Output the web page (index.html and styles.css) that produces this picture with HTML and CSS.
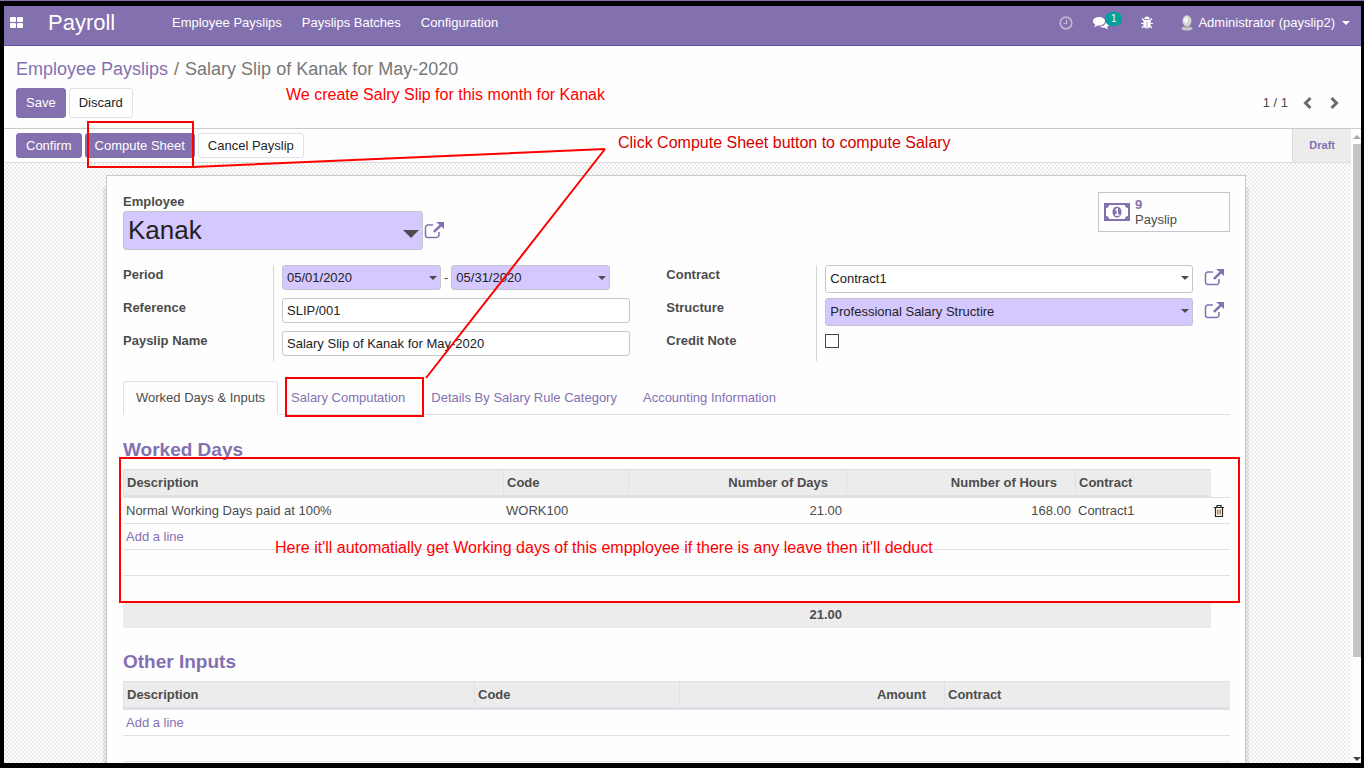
FILE: index.html
```html
<!DOCTYPE html>
<html lang="en">
<head>
  <meta charset="UTF-8">
  <meta name="viewport" content="width=device-width, initial-scale=1.0">
  <title>Payroll - Salary Slip of Kanak for May-2020</title>
  <link rel="stylesheet" href="styles.css">
</head>
<body>
  <svg class="defs" aria-hidden="true">
    <symbol id="ext-link" viewBox="0 0 20 17">
      <path d="M9 3H4a2.500 2.500 0 0 0-2.500 2.500v7.500A2.500 2.500 0 0 0 4 15.500h8.500A2.500 2.500 0 0 0 15 13v-3" fill="none" stroke="currentColor" stroke-width="1.500"/>
      <path d="M12 0h8v7l-2.600-2.600-6.600 6.400-1.800-1.700L15.500 2.800z" fill="currentColor"/>
    </symbol>
  </svg>

  <div class="window">
    <nav class="navbar">
      <a href="#" class="apps" aria-label="Apps">
        <svg width="13" height="11" viewBox="0 0 13 11" fill="#fff"><rect width="6" height="5" rx="1"/><rect x="7" width="6" height="5" rx="1"/><rect y="6" width="6" height="5" rx="1"/><rect x="7" y="6" width="6" height="5" rx="1"/></svg>
      </a>
      <a href="#" class="brand">Payroll</a>
      <div class="menu">
        <a href="#">Employee Payslips</a>
        <a href="#">Payslips Batches</a>
        <a href="#">Configuration</a>
      </div>
      <div class="systray">
        <a href="#" class="clock" aria-label="Activities">
          <svg width="14" height="14" viewBox="0 0 14 14" fill="none" stroke="#c1b6d5"><circle cx="7" cy="7" r="5.800" stroke-width="1.700"/><path d="M7.500 3.500v4H4.500" stroke-width="1.200"/></svg>
        </a>
        <a href="#" class="chat" aria-label="Messages">
          <svg width="16" height="14" viewBox="0 0 16 14" fill="#fff"><path d="M6 1c3.300 0 6 1.900 6 4.200S9.300 9.500 6 9.500c-.5 0-1 0-1.500-.1C3.500 10.200 2.300 10.700 1 10.800c.7-.6 1.200-1.300 1.300-2.200C.900 7.800 0 6.600 0 5.200 0 2.900 2.700 1 6 1z"/><path d="M13 5c1.800.6 3 1.800 3 3.200 0 1.200-.8 2.100-2 2.800.2.900.7 1.500 1.300 2.100-1.300-.1-2.500-.6-3.500-1.400-2.200.3-4.200-.2-5.400-1.100C10 10.600 13.200 8.500 13 5z"/></svg>
          <span class="badge">1</span>
        </a>
        <a href="#" class="bug" aria-label="Debug">
          <svg width="12" height="13" viewBox="0 0 12 13"><path d="M3.300 3.200a2.700 2.700 0 0 1 5.400 0zM2.400 4h7.200v5c0 2-1.500 3.500-3.600 3.500S2.400 11 2.400 9z" fill="#fff"/><path d="M1 2.500l2.200 2M11 2.500l-2.200 2M0 7.500h12M1 12l2.200-2.300M11 12L8.800 9.700" stroke="#fff" stroke-width="1.200"/><path d="M6 5.500V12" stroke="#b3a6cc"/></svg>
        </a>
        <a href="#" class="user">
          <svg width="12" height="16" viewBox="0 0 12 16"><ellipse cx="6" cy="13.500" rx="5.500" ry="2" fill="#c9cac9"/><path d="M4 10h4l1 3H3z" fill="#aaa9b0"/><ellipse cx="6" cy="5.800" rx="4.500" ry="5.500" fill="#d3d7d4"/><ellipse cx="5" cy="5" rx="2" ry="3" fill="#f2f4f1"/></svg>
          <span>Administrator (payslip2)</span>
          <i class="caret"></i>
        </a>
      </div>
    </nav>

    <header class="control-panel">
      <div class="breadcrumb">
        <a href="#">Employee Payslips</a>
        <span class="sep">/</span>
        <span>Salary Slip of Kanak for May-2020</span>
      </div>
      <div class="cp-row">
        <div class="btns">
          <button class="btn primary">Save</button>
          <button class="btn">Discard</button>
        </div>
        <div class="pager">
          <span>1 / 1</span>
          <button aria-label="Previous"><svg width="9" height="12" viewBox="0 0 9 12"><path d="M7.500 1L2.500 6l5 5" fill="none" stroke="#6b6b6b" stroke-width="3"/></svg></button>
          <button aria-label="Next"><svg width="9" height="12" viewBox="0 0 9 12"><path d="M1.500 1l5 5-5 5" fill="none" stroke="#6b6b6b" stroke-width="3"/></svg></button>
        </div>
      </div>
    </header>

    <main class="content">
      <div class="form-view">
        <div class="statusbar">
          <button class="btn primary">Confirm</button>
          <button class="btn primary">Compute Sheet</button>
          <button class="btn">Cancel Payslip</button>
          <span class="status">Draft</span>
        </div>

        <div class="sheet-bg">
          <div class="sheet">
            <div class="title-row">
              <div>
                <label for="employee">Employee</label>
                <div class="employee">
                  <select id="employee" class="field required"><option>Kanak</option></select>
                  <a href="#" class="ext" aria-label="Open employee"><svg><use href="#ext-link"/></svg></a>
                </div>
              </div>
              <button class="stat">
                <svg width="26" height="18" viewBox="0 0 26 18"><path fill-rule="evenodd" d="M0 0h26v18H0zM5 2c0 2-1.200 3-3 3v8c1.800 0 3 1 3 3h16c0-2 1.200-3 3-3V5c-1.800 0-3-1-3-3z" fill="#8370ae"/><ellipse cx="13" cy="9" rx="4.500" ry="5.500" fill="#8370ae"/><path d="M11.300 7.200L13.300 5.800v6M11 12h4.500" fill="none" stroke="#fff" stroke-width="1.400"/></svg>
                <span><b>9</b>Payslip</span>
              </button>
            </div>

            <div class="groups">
              <div class="group">
                <label for="date-from">Period</label>
                <div class="cell period">
                  <input id="date-from" class="field required date" value="05/01/2020">
                  <span>-</span>
                  <input class="field required date" aria-label="Period end" value="05/31/2020">
                </div>
                <label for="reference">Reference</label>
                <div class="cell"><input id="reference" class="field" value="SLIP/001"></div>
                <label for="name">Payslip Name</label>
                <div class="cell"><input id="name" class="field" value="Salary Slip of Kanak for May-2020"></div>
              </div>
              <div class="group">
                <label for="contract">Contract</label>
                <div class="cell">
                  <select id="contract" class="field"><option>Contract1</option></select>
                  <a href="#" class="ext" aria-label="Open contract"><svg><use href="#ext-link"/></svg></a>
                </div>
                <label for="structure">Structure</label>
                <div class="cell">
                  <select id="structure" class="field required"><option>Professional Salary Structire</option></select>
                  <a href="#" class="ext" aria-label="Open structure"><svg><use href="#ext-link"/></svg></a>
                </div>
                <label for="credit">Credit Note</label>
                <div class="cell"><input id="credit" type="checkbox"></div>
              </div>
            </div>

            <div class="tabs">
              <a href="#" class="active">Worked Days &amp; Inputs</a>
              <a href="#">Salary Computation</a>
              <a href="#">Details By Salary Rule Category</a>
              <a href="#">Accounting Information</a>
            </div>

            <h2>Worked Days</h2>
            <table class="list worked">
              <colgroup><col class="w-desc"><col class="w-code"><col class="w-days"><col class="w-hours"><col><col class="w-trash"></colgroup>
              <thead>
                <tr><th>Description</th><th>Code</th><th class="num">Number of Days</th><th class="num">Number of Hours</th><th>Contract</th><td></td></tr>
              </thead>
              <tbody>
                <tr>
                  <td>Normal Working Days paid at 100%</td><td>WORK100</td><td class="num">21.00</td><td class="num">168.00</td><td>Contract1</td>
                  <td class="trash"><button aria-label="Delete"><svg width="10" height="12" viewBox="0 0 10 12" fill="none" stroke="#222"><path d="M0 2.500h10M3 2.500v-2h4v2M1.500 3v8.500h7V3" stroke-width="1.200"/><path d="M3.500 4.500v5M5 4.500v5M6.500 4.500v5" stroke="#8a5a2c" stroke-width=".8"/></svg></button></td>
                </tr>
                <tr><td colspan="6"><a href="#">Add a line</a></td></tr>
                <tr><td colspan="6"></td></tr>
                <tr class="last"><td colspan="6"></td></tr>
              </tbody>
              <tfoot>
                <tr><td></td><td></td><td class="num">21.00</td><td></td><td></td><td class="blank"></td></tr>
              </tfoot>
            </table>

            <h2>Other Inputs</h2>
            <table class="list other">
              <colgroup><col class="o-desc"><col class="o-code"><col class="o-amount"><col></colgroup>
              <thead>
                <tr><th>Description</th><th>Code</th><th class="num">Amount</th><th>Contract</th></tr>
              </thead>
              <tbody>
                <tr><td colspan="4"><a href="#">Add a line</a></td></tr>
                <tr><td colspan="4"></td></tr>
                <tr><td colspan="4"></td></tr>
              </tbody>
            </table>
          </div>
        </div>
      </div>
      <div class="scrollbar"><i class="up"></i><i class="thumb"></i><i class="down"></i></div>
    </main>
  </div>

  <!-- tutorial notes drawn over the form -->
  <div class="notes">
    <svg width="1364" height="768" fill="none" stroke="#f00" stroke-width="2">
      <rect x="88" y="122" width="105" height="45"/>
      <rect x="286" y="378" width="137" height="38"/>
      <rect x="120" y="458" width="1119" height="144"/>
      <path d="M193 167L605 149M605 149L426 378"/>
    </svg>
    <p class="note create">We create Salry Slip for this month for Kanak</p>
    <p class="note compute">Click Compute Sheet button to compute Salary</p>
    <p class="note days">Here it'll automatially get Working days of this empployee if there is any leave then it'll deduct</p>
  </div>
</body>
</html>
```
FILE: styles.css
```css
* { box-sizing: border-box; }
body {
  margin: 0;
  height: 100vh;
  overflow: hidden;
  padding: 5px 3px 5px 4px;
  border-top: 1px solid #8370ae;
  background: #000;
  color: #4c4c4c;
  font: 13px/20px "Liberation Sans", Arial, sans-serif;
}
a { color: #8370b0; text-decoration: none; }
button, input, select { font: inherit; color: inherit; }
button { border: 0; padding: 0; background: none; }
svg { display: block; flex: none; }
.defs { position: absolute; width: 0; height: 0; }

.window { display: flex; flex-direction: column; height: 100%; background: #fefefe; }

/* top bar */
.navbar {
  display: flex;
  align-items: center;
  flex: none;
  height: 40px;
  padding: 0 11px 6px 6px;
  background: #8370ae;
  border-bottom: 1px solid #6550a0;
}
.navbar a { color: #fff; }
.brand { width: 124px; margin-left: 25px; font-size: 22px; }
.menu { display: flex; gap: 20px; }
.systray { display: flex; align-items: center; margin-left: auto; }
.chat { display: flex; align-items: center; margin: 0 19px 0 20px; }
.badge {
  height: 14px;
  margin: -8px 0 0 -4px;
  padding: 0 6px;
  border-radius: 7px;
  background: #00a09d;
  font-size: 10px;
  line-height: 14px;
}
.user { display: flex; align-items: center; gap: 5px; margin-left: 28px; }
.caret { margin-left: 2px; border: 4px solid transparent; border-top-color: #fff; border-bottom: 0; }

/* breadcrumb and buttons */
.control-panel { flex: none; padding: 10px 12px; border-bottom: 1px solid #c9c9c9; }
.breadcrumb { display: flex; gap: 6px; font-size: 18px; line-height: 26px; color: #777; }
.cp-row { display: flex; justify-content: space-between; margin-top: 6px; }
.btns { display: flex; gap: 3px; }
.btn {
  height: 30px;
  padding: 0 9px;
  border: 1px solid #dee2e6;
  border-radius: 3px;
  background: #fff;
  color: #212529;
}
.btn.primary { border-color: #8370ae; background: #8370ae; color: #fff; }
.pager { display: flex; align-items: center; gap: 18px; padding-right: 10px; }
.pager span { margin-right: -3px; }

/* form */
.content { display: flex; flex: 1; min-height: 0; overflow: hidden; }
.form-view { flex: 1; min-width: 0; }
.statusbar {
  display: flex;
  align-items: center;
  gap: 3px;
  height: 34px;
  padding-left: 12px;
  border-bottom: 1px solid #dcdcdc;
  background: #fefefe;
}
.statusbar .btn { height: 25px; }
.status {
  margin-left: auto;
  padding: 0 16px;
  border-left: 1px solid #dcdcdc;
  background: #ececec;
  color: #8370b0;
  font-size: 11px;
  font-weight: bold;
  line-height: 33px;
}
.sheet-bg {
  padding: 12px 3px 30px 0;
  background: repeating-conic-gradient(#ebebeb 0 25%, #fff 0 50%) 0 0 / 4px 4px;
}
.sheet {
  max-width: 1140px;
  margin: 0 auto;
  padding: 16px 15px 40px 16px;
  border: 1px solid #c8c8cd;
  background: #fefefe;
  box-shadow: 3px 12px 0 rgba(0, 0, 0, .08), -3px 12px 0 rgba(0, 0, 0, .08);
}
label { font-weight: bold; }
.title-row { display: flex; justify-content: space-between; align-items: flex-start; }
.title-row label { display: block; line-height: 19px; }
.employee { display: flex; align-items: center; gap: 1px; }
.ext svg { width: 20px; height: 17px; }

.stat {
  display: flex;
  align-items: center;
  gap: 5px;
  width: 132px;
  height: 40px;
  padding: 0 5px;
  border: 1px solid #c5c5cc;
  text-align: left;
  line-height: 15px;
}
.stat b { display: block; color: #8370b0; }

.field {
  width: 100%;
  height: 25px;
  padding: 0 4px;
  border: 1px solid #c5c5cc;
  border-radius: 3px;
  background-color: #fff;
  color: #222;
}
.field.required { background-color: #d4c8fe; }
select.field { appearance: none; height: 28px; }
select.field, .date {
  background-image: url("data:image/svg+xml,%3Csvg xmlns='http://www.w3.org/2000/svg' viewBox='0 0 8 4'%3E%3Cpath d='M0 0h8L4 4z' fill='%234c4c4c'/%3E%3C/svg%3E");
  background-repeat: no-repeat;
  background-size: 8px 4px;
  background-position: right 3px top 10px;
}
.employee select.field {
  width: 300px;
  height: 39px;
  padding: 0 4px 2px;
  font-size: 26px;
  background-size: 16px 8px;
  background-position: right 3px top 18px;
}

.groups { display: grid; grid-template-columns: 9fr 10fr; gap: 36px; margin-top: 15px; }
.group { display: grid; grid-template-columns: 150px 1fr; grid-template-rows: 33px 33px 30px; }
.cell { display: flex; align-items: flex-start; gap: 11px; padding-left: 8px; border-left: 1px solid #d5d5d5; }
.cell .ext { padding: 4px 6px 0 0; }
.cell.period { gap: 3px; padding-right: 20px; }
.cell.period span { padding-top: 3px; }
input[type=checkbox] {
  appearance: none;
  width: 14px;
  height: 14px;
  margin: 3px 0 0;
  border: 1px solid #444;
  background: #fff;
}

.tabs { display: flex; margin: 20px 0 24px; border-bottom: 1px solid #dee2e6; }
.tabs a { padding: 6px 12px 5px; border: 1px solid transparent; }
.tabs .active {
  margin-bottom: -1px;
  border-color: #dee2e6;
  border-bottom-color: #fefefe;
  border-radius: 3px 3px 0 0;
  background: #fefefe;
  color: #4c4c4c;
}

/* one2many lists */
h2 { margin: 0 0 8px; color: #8370b0; font-size: 19px; line-height: 22px; }
.list { width: 100%; table-layout: fixed; border-collapse: separate; border-spacing: 0; }
.list + h2 { margin-top: 23px; }
.list td { height: 26px; padding: 0 4px 0 3px; border-bottom: 1px solid #dee2e6; }
.list th {
  height: 29px;
  padding: 0 3px;
  border: solid #dee2e6;
  border-width: 1px 0 3px 1px;
  background: #ececec;
  text-align: left;
}
.list .num { text-align: right; }
.list th.num { padding-right: 18px; }
.list .trash { padding: 0 6px 0 0; }
.trash button { display: block; margin-left: auto; }
.list .last td { border-bottom: 0; }
.list tfoot td { border: 0; background: #ececec; font-weight: bold; }
.list tfoot .blank { background: none; }
.w-desc { width: 380px; }
.w-code { width: 125px; }
.w-days { width: 218px; }
.w-hours { width: 229px; }
.w-trash { width: 19px; }
.o-desc { width: 351px; }
.o-code { width: 205px; }
.o-amount { width: 265px; }

/* scrollbar */
.scrollbar { display: flex; flex-direction: column; align-items: center; width: 10px; padding: 6px 0 2px 2px; background: #fefefe; }
.scrollbar .up { border: 4px solid transparent; border-bottom-color: #a5a5a5; border-top: 0; }
.scrollbar .thumb { width: 100%; height: 82%; margin-top: 5px; background: #c5c5c8; }
.scrollbar .down { margin-top: auto; border: 4px solid transparent; border-top-color: #444; border-bottom: 0; }

/* notes */
.notes { position: absolute; top: 0; left: 0; color: #f00; pointer-events: none; }
.note { position: absolute; margin: 0; font-size: 16px; white-space: nowrap; }
.create { left: 286px; top: 85px; }
.compute { left: 618px; top: 133px; color: #d40000; }
.days { left: 275px; top: 538px; }
```
